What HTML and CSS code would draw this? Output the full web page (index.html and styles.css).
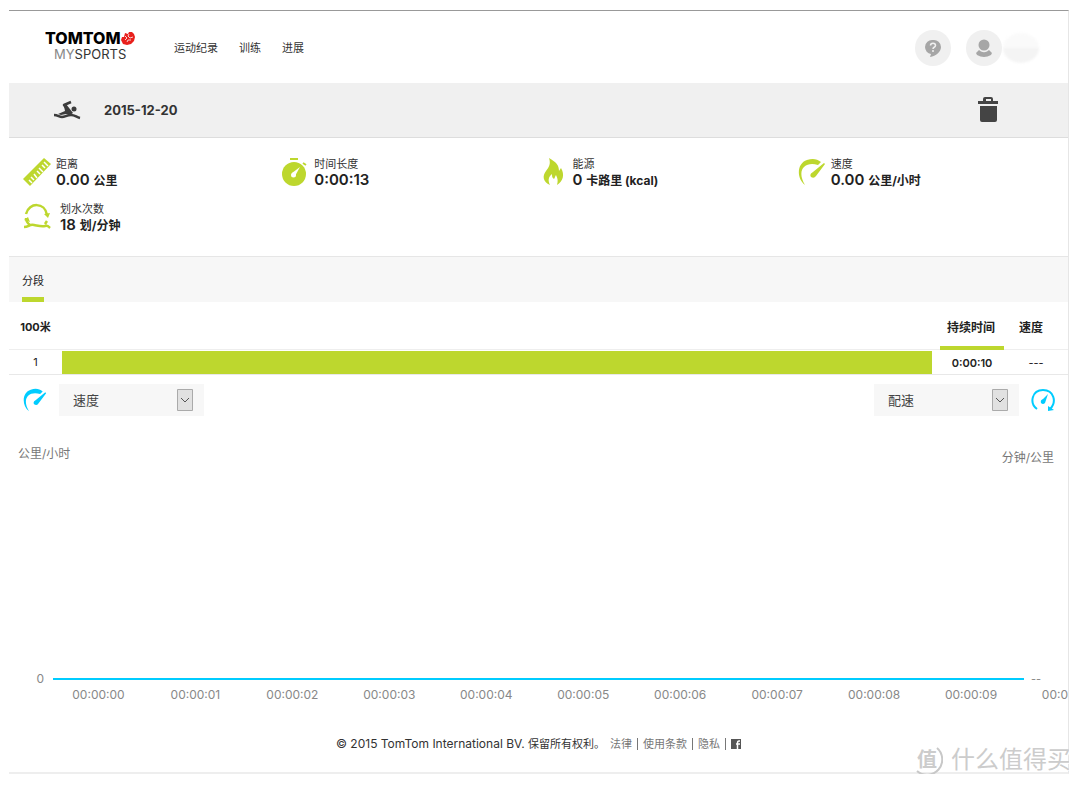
FILE: index.html
```html
<!DOCTYPE html>
<html lang="zh-CN">
<head>
<meta charset="utf-8">
<title>TomTom MySports</title>
<link rel="stylesheet" href="styles.css">
</head>
<body>
<div class="page">
  <header class="header">
    <a class="logo" href="#">
      <span class="logo-top">TOMTOM<svg width="14" height="14" viewBox="0 0 14 14"><path fill="#e8201c" d="m4 2 3 1 1-2 3 0 2 2 1 3-1 4-3 3-4 1-4-1-2-4 1-3 2 0z"/><path fill="none" stroke="#fff" stroke-width=".8" d="m4 5 2 2-2 2M8 3 7 5l2 2 3-1M7 9l3 0M6 11l1-2"/></svg></span>
      <span class="logo-bottom"><span class="thin">MY</span>SPORTS</span>
    </a>
    <nav class="nav"><a href="#">运动纪录</a><a href="#">训练</a><a href="#">进展</a></nav>
    <div class="account">
      <button class="round" aria-label="帮助"><svg width="18" height="20" viewBox="0 0 18 20"><path fill="#a6a6a6" d="M9 2a7 7 0 0 1 8 7c0 5-5 9-11 10l1-3a7 7 0 0 1-6-7 7 7 0 0 1 8-7z"/><path fill="none" stroke="#f0f0f0" stroke-width="1.500" d="M6.500 7.500c0-3 5-3 5 0 0 2-2.500 1.500-2.500 3.500M9 12v2"/></svg></button>
      <button class="round" aria-label="账户"><svg width="18" height="20" viewBox="0 0 18 20"><circle cx="9" cy="7" r="5.500" fill="#a6a6a6"/><path fill="#a6a6a6" d="m4 12 2 1.500q3 1.500 6 0l2-1.500 3 3-1 2q-7 4-14 0l-1-2z"/></svg></button>
      <span class="name-blur"></span>
    </div>
  </header>

  <section class="title">
    <svg width="28" height="20" viewBox="0 0 28 20"><path fill="none" stroke="#3c3c3c" stroke-width="2.500" stroke-linejoin="round" d="m18 2-7 3 6 8"/><path fill="#3c3c3c" d="m11 6 2-2 7 9-3 2-4-1-5 1-3-1 7-3z"/><circle cx="21" cy="9" r="2.500" fill="#3c3c3c"/><path fill="none" stroke="#3c3c3c" stroke-width="2.500" d="M1 15c4 0 5 2 8 2s5-2 9-2 5 2 9 3"/></svg>
    <h1>2015-12-20</h1>
    <button class="trash" aria-label="删除"><svg width="20" height="26" viewBox="0 0 20 26"><path fill="#444" d="M0 4h5V2q0-2 2-2h6q2 0 2 2v2h5v3H0zM2 9h17v14q0 2-2 2H4q-2 0-2-2z"/><path fill="#f0f0f0" d="M8 2h5v2H8z"/></svg></button>
  </section>

  <section class="metrics">
    <div class="metric">
      <svg width="28" height="28" viewBox="0 0 28 28"><path fill="#bdd72e" d="m0 21 21-21 7 6L7 28z"/><path stroke="#fff" stroke-width="1.500" d="m6 22 3 3m-1-6 3 3m0-6 3 4m0-7 3 3m-1-6 4 4m-1-7 3 3m-1-6 4 4"/></svg>
      <dl><dt>距离</dt><dd>0.00 <small>公里</small></dd></dl>
    </div>
    <div class="metric">
      <svg width="28" height="28" viewBox="0 0 28 28"><circle cx="13" cy="16" r="12" fill="#bdd72e"/><path stroke="#bdd72e" stroke-width="2" d="M9 1h8M22 5l3 2"/><circle cx="12.500" cy="17" r="2.500" fill="#fff"/><path fill="#fff" d="m19 9-5 9-3-3z"/></svg>
      <dl><dt>时间长度</dt><dd>0:00:13</dd></dl>
    </div>
    <div class="metric">
      <svg width="28" height="28" viewBox="-3 0 28 28"><path fill="#bdd72e" d="M6 0c7 4 10 7 10 13l2-3c4 7 2 13-4 17 1-4 1-6-1-10-1 1-1 3-2 4-2-1-2-3-2-5-4 3-4 7-2 11-7-3-8-9-4-14 3-4 5-7 3-13z"/></svg>
      <dl><dt>能源</dt><dd>0 <small>卡路里 (kcal)</small></dd></dl>
    </div>
    <div class="metric">
      <svg width="28" height="28" viewBox="0 0 28 28"><path fill="#bdd72e" d="M7 27C-2 20-1 5 9 2c6-2 10-1 14 2l-3 3C7 3-2 12 7 27zM26 5l1 1-9 12q-2 3-5 1-2-3 2-5z"/></svg>
      <dl><dt>速度</dt><dd>0.00 <small>公里/小时</small></dd></dl>
    </div>
    <div class="metric">
      <svg width="32" height="28" viewBox="0 0 32 28"><path fill="none" stroke="#bdd72e" stroke-width="2.500" d="M3 11C6-1 22-1 24 12M3 15q0 4 4 7M1 24c5 0 5-3 10-2s8 2 11 1 3 0 5 2M24 18l-2 3"/><path fill="#bdd72e" d="m21 11 6-1-2 5zM1 17l4-3 2 5z"/></svg>
      <dl><dt>划水次数</dt><dd>18 <small>划/分钟</small></dd></dl>
    </div>
  </section>

  <nav class="tabs"><a href="#">分段</a></nav>

  <table class="laps">
    <thead><tr><th class="lap" scope="col">100米</th><th class="bar-cell"></th><th class="value sorted" scope="col">持续时间</th><th class="value" scope="col">速度</th></tr></thead>
    <tbody><tr><td class="lap">1</td><td class="bar-cell"><div class="bar"></div></td><td class="value time">0:00:10</td><td class="value">---</td></tr></tbody>
  </table>

  <section class="chart">
    <div class="pickers">
      <svg width="24" height="24" viewBox="0 0 28 28"><path fill="#0cf" d="M7 27C-2 20-1 5 9 2c6-2 10-1 14 2l-3 3C7 3-2 12 7 27zM26 5l1 1-9 12q-2 3-5 1-2-3 2-5z"/></svg>
      <div class="picker"><select aria-label="左轴"><option>速度</option></select><svg class="arrow" width="16" height="22" viewBox="0 0 16 22"><path fill="#e1e1e1" stroke="#aaa" d="M.5.5h15v21H.5z"/><path fill="none" stroke="#555" d="m4 9 4 4 4-4"/></svg></div>
      <div class="picker right"><select aria-label="右轴"><option>配速</option></select><svg class="arrow" width="16" height="22" viewBox="0 0 16 22"><path fill="#e1e1e1" stroke="#aaa" d="M.5.5h15v21H.5z"/><path fill="none" stroke="#555" d="m4 9 4 4 4-4"/></svg></div>
      <svg width="24" height="24" viewBox="0 0 24 24"><path fill="none" stroke="#0cf" stroke-width="2" d="M6 21C-2 15 1 2 12 2s14 12 7 19"/><path fill="#0cf" d="m17 18 6 4-6 1zM17 6l-3 9q-2 2-4 0-1-3 2-4z"/></svg>
    </div>
    <div class="units"><span>公里/小时</span><span class="unit-right">分钟/公里</span></div>
    <div class="plot"><span class="zero">0</span><span class="line"></span><span class="none">--</span></div>
    <div class="ticks"><span>00:00:00</span><span>00:00:01</span><span>00:00:02</span><span>00:00:03</span><span>00:00:04</span><span>00:00:05</span><span>00:00:06</span><span>00:00:07</span><span>00:00:08</span><span>00:00:09</span><span class="last">00:0</span></div>
  </section>

  <footer class="footer">
    <span class="copy">© 2015 TomTom International BV. <span class="rights">保留所有权利。</span></span>
    <a href="#">法律</a><i></i><a href="#">使用条款</a><i></i><a href="#">隐私</a><i></i>
    <a class="fb" href="#" aria-label="Facebook"><svg width="10" height="10" viewBox="0 0 10 10"><path fill="#555" d="M0 0h10v10H0z"/><path fill="none" stroke="#fff" stroke-width="1.500" d="M9 2H8q-1.500 0-1.500 2v6M5 5h4"/></svg></a>
  </footer>
  <div class="watermark"><span class="seal"><svg width="32" height="32" viewBox="0 0 32 32"><path fill="none" stroke="#c8c8c8" stroke-width="2" d="M26 4a15 15 0 0 1-20 23"/></svg><span>值</span></span><span>什么值得买</span></div>
</div>
</body>
</html>
```
FILE: styles.css
```css
* { box-sizing: border-box; }
body { margin: 10px 11px 8px 9px; background: #fff; color: #222; font-family: Inter, "Noto Sans CJK SC", sans-serif; font-size: 11px; line-height: 16px; }
a { color: inherit; text-decoration: none; }
button { border: 0; padding: 0; background: none; }
svg { display: block; flex: none; }
.page { position: relative; border-top: 1px solid #999; border-right: 1px solid #e6e6e6; border-bottom: 2px solid #eee; }

.header { display: flex; align-items: center; height: 72px; padding: 1px 29px 0 36px; }
.logo { display: flex; flex-direction: column; width: 93px; padding-bottom: 4px; color: #000; }
.logo-top { display: flex; align-items: center; font-size: 16px; font-weight: 800; }
.logo-bottom { padding-left: 9px; font-size: 13px; color: #333; }
.thin { color: #888; }
.nav { display: flex; gap: 21px; margin-left: 36px; color: #333; }
.account { display: flex; align-items: center; gap: 15px; margin-left: auto; }
.round { display: grid; place-items: center; width: 36px; height: 36px; border-radius: 50%; background: #f0f0f0; }
.name-blur { width: 36px; height: 30px; margin-left: -14px; border-radius: 50%; background: linear-gradient(#fafafa 50%, #f4f4f4 50%); filter: blur(1px); }

.title { display: flex; align-items: center; height: 55px; padding: 0 70px 0 44px; background: #f0f0f0; border-bottom: 1px solid #ddd; }
.title h1 { margin: 0 0 0 23px; font-size: 13px; font-weight: 700; color: #333; }
.trash { margin-left: auto; }

.metrics { display: grid; grid-template-columns: repeat(4, 1fr); row-gap: 13px; padding: 18px 12px 23px 14px; }
.metric { display: flex; gap: 5px; align-items: center; height: 32px; }
.metric dl { margin: 0; }
.metric dt { color: #333; }
.metric dd { margin: 0; font-size: 15px; font-weight: 600; white-space: nowrap; }
.metric small { font-size: 12px; font-weight: 700; }

.tabs { display: flex; height: 46px; padding-left: 13px; border-top: 1px solid #e6e6e6; background: #f7f7f7; }
.tabs a { padding-top: 16px; border-bottom: 5px solid #bdd72e; }

.laps { width: 100%; border-collapse: separate; border-spacing: 0; table-layout: fixed; }
.laps th { height: 48px; padding: 3px 0 0; border-bottom: 1px solid #eee; font-weight: 700; }
.laps td { height: 25px; padding: 0; border-bottom: 1px solid #e8e8e8; text-align: center; }
.laps .lap { width: 53px; }
.laps .value { width: 64px; }
.laps th.value { padding: 5px 10px 0 0; font-size: 12px; }
.laps th.sorted { padding: 8px 2px 0 0; border-bottom: 4px solid #bdd72e; }
.laps .bar-cell { padding-right: 8px; }
.laps td.value { padding-top: 2px; }
.laps .time { font-weight: 600; }
.bar { height: 23px; background: #bdd72e; }

.pickers { display: flex; align-items: center; gap: 12px; padding: 9px 13px 0 14px; }
.picker { display: grid; align-items: center; background: #f7f7f7; width: 145px; height: 32px; }
.picker select, .picker .arrow { grid-area: 1 / 1; }
.picker select { appearance: none; width: 100%; height: 32px; padding: 0 14px; border: 0; background: none; color: #444; font: inherit; font-size: 13px; }
.arrow { justify-self: end; margin-right: 11px; pointer-events: none; }
.right { margin-left: auto; }
.units { display: flex; justify-content: space-between; height: 255px; padding: 30px 14px 0 9px; color: #777; font-size: 12px; }
.unit-right { padding-top: 4px; }
.plot { display: flex; align-items: center; height: 16px; color: #888; }
.zero { width: 44px; padding-right: 9px; text-align: right; font-size: 12px; }
.line { flex: 1; height: 2px; background: #0cf; }
.none { width: 44px; padding-left: 7px; }
.ticks { display: grid; grid-template-columns: repeat(10, 2fr) minmax(0, 1fr); padding-left: 41px; color: #888; font-size: 12px; text-align: center; }
.last { text-align: right; }

.footer { display: flex; align-items: center; justify-content: center; gap: 5px; padding: 33px 0 20px; color: #777; }
.copy { color: #333; font-size: 12px; }
.rights { font-size: 11px; }
.footer i { width: 1px; height: 12px; background: #777; }
.watermark { position: absolute; right: -3px; bottom: -6px; display: flex; align-items: center; gap: 8px; color: #ccc; font-size: 24px; line-height: 36px; text-shadow: 1px 1px #fff; pointer-events: none; }
.seal { display: grid; place-items: center; font-size: 20px; font-weight: 700; }
.seal > * { grid-area: 1 / 1; }
```
